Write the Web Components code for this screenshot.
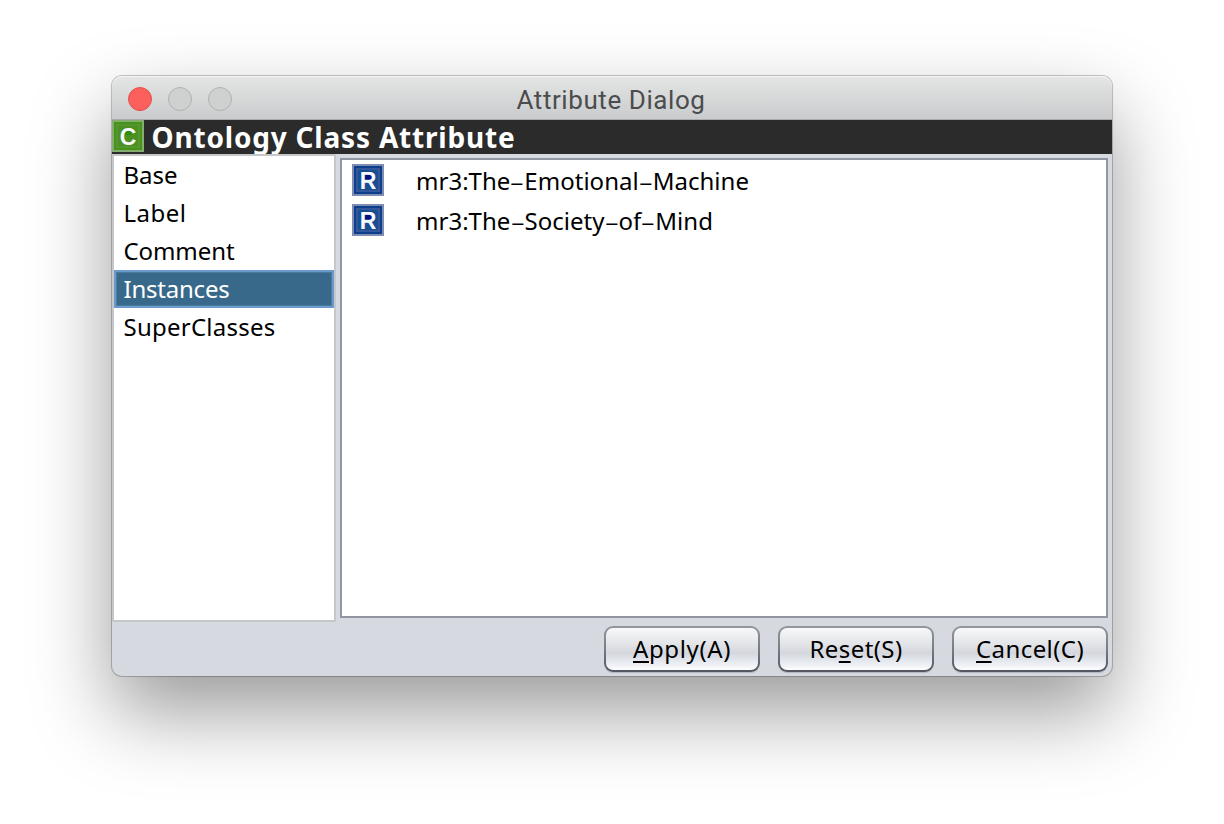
<!DOCTYPE html>
<html lang="en">
<head>
<meta charset="utf-8">
<title>Attribute Dialog</title>
<style>
html,body{margin:0;height:100%;background:#fff;overflow:hidden}
body{box-sizing:border-box;padding:76px 112px 148px;font-family:"Noto Sans","Open Sans",sans-serif;font-size:24px;color:#000}
</style>
</head>
<body>
<attribute-dialog></attribute-dialog>
<script>
const define = (name, html, ready) => {
  const t = document.createElement('template');
  t.innerHTML = html;
  customElements.define(name, class extends HTMLElement {
    connectedCallback() {
      if (this.shadowRoot) return;
      this.attachShadow({mode: 'open'}).append(t.content.cloneNode(true));
      if (ready) ready(this);
    }
  });
};

/* Text tracked so that its run fills the given width. */
define('tracked-text', `<style>:host{display:inline-block;white-space:pre}</style><slot></slot>`, el => {
  const want = +el.getAttribute('width');
  const n = el.textContent.length - el.querySelectorAll('wide-hyphen').length;
  const now = el.getBoundingClientRect().width;
  el.style.letterSpacing = ((want - now) / n) + 'px';
});

define('wide-hyphen', `<style>span{display:inline-block;transform:translateY(1px) scale(1.9,.85)}</style><span><slot></slot></span>`);

define('type-icon', `<style>
:host{display:block;width:32px;height:32px;flex:none}
svg{display:block}
text{font:bold 23px "Liberation Sans",sans-serif;fill:#f6f8fa;text-anchor:middle}
</style>
<svg width="32" height="32" viewBox="0 0 32 32">
<rect class="a" width="32" height="32"/><rect class="b" x="2" y="2" width="28" height="28"/>
<rect class="c" x="4" y="4" width="24" height="24"/><rect class="d" x="6" y="6" width="20" height="20"/>
<rect class="e" x="13" y="11" width="7" height="4"/>
<text x="16" y="24.5"></text></svg>`, el => {
  const r = el.shadowRoot, k = el.getAttribute('kind');
  const colors = k === 'C' ? ['#86ad70','#479218','#55972f','#4c9022','#2f8a10'] : ['#7f8db5','#0d3f8a','#33589a','#1a4c92','#00107c'];
  ['a','b','c','d','e'].forEach((c, i) => r.querySelector('.' + c).setAttribute('fill', colors[i]));
  r.querySelector('text').textContent = k;
});

define('title-bar', `<style>
:host{display:grid;grid-template-columns:1fr auto 1fr;align-items:center;height:44px;box-sizing:border-box;border-bottom:1px solid #aaacac;background:linear-gradient(#e4e6e6,#c9cbcc);box-shadow:inset 0 1px #f5f6f6;color:#4b4c4d;line-height:42px}
.lights{display:flex;gap:16px;padding:0 0 0 16px}
i{width:24px;height:24px;box-sizing:border-box;border:1px solid #b0b1b1;border-radius:50%;background:#cfd0d0}
.close{background:#fc605c;border-color:#e2504b}
.t{margin-left:-2px;padding-top:3px}
</style><div class="lights"><i class="close"></i><i></i><i></i></div><div class="t"><slot></slot></div>`);

define('header-band', `<style>
:host{display:flex;height:34px;background:#2b2b2b;color:#fff;font-weight:700;font-size:28px;line-height:35px}
.t{padding-left:7.5px}
</style><type-icon kind="C"></type-icon><div class="t"><slot></slot></div>`);

define('nav-item', `<style>
:host{display:block;box-sizing:border-box;height:38px;border:2px solid transparent;padding-left:7.5px;line-height:33px}
:host([selected]){background:#39698a;color:#fff;border-color:#6b9bcc;box-shadow:inset 0 0 0 1px #4c7ba0}
</style><slot></slot>`);

define('side-list', `<style>
:host{display:block;box-sizing:border-box;width:224px;height:468px;border:2px solid #c6c7c8;background:#fff}
</style><slot></slot>`);

define('resource-row', `<style>
:host{display:flex;align-items:center;height:40px;padding-left:10px;gap:32px;line-height:40px}
.t{padding-top:1px}
</style><type-icon kind="R"></type-icon><div class="t"><slot></slot></div>`);

define('instance-list', `<style>
:host{display:block;box-sizing:border-box;flex:1;height:460px;margin:4px 4px 0;border:2px solid #9296a3;background:#fff}
</style><slot></slot>`);

define('push-button', `<style>
:host{display:block;box-sizing:border-box;width:156px;height:46px;padding:2px;border-radius:9px;background:linear-gradient(#94989e,#787c83 50%,#52565e);box-shadow:0 2px 1px -1px #b2b6bd}
div{height:42px;border-radius:7px;background:linear-gradient(#f8f8f9,#e4e6e9 35%,#d5d7de 60%,#e6e9ef 80%,#fbfdff);text-align:center;line-height:42px}
</style><div><slot></slot></div>`);

define('attribute-dialog', `<style>
:host{display:flex;flex-direction:column;width:1000px;height:600px;border-radius:10px;background:#d6d9e0;box-shadow:0 0 0 1px rgba(0,0,0,.2),0 0 3px rgba(0,0,0,.06),0 36px 80px rgba(0,0,0,.4)}
title-bar{border-radius:10px 10px 0 0}
title-bar tracked-text{font-family:Roboto,sans-serif;font-size:26px}
main{display:flex;height:468px}
footer{display:flex;justify-content:flex-end;gap:18px;padding:4px 4px 0}
u{text-decoration-thickness:2px;text-underline-offset:3px;text-decoration-skip-ink:none}
wide-hyphen{display:inline-block;width:14px;text-align:center;letter-spacing:0}
</style>
<title-bar><tracked-text width="189">Attribute Dialog</tracked-text></title-bar>
<header-band><tracked-text width="364">Ontology Class Attribute</tracked-text></header-band>
<main>
<side-list>
<nav-item><tracked-text width="54">Base</tracked-text></nav-item>
<nav-item><tracked-text width="63">Label</tracked-text></nav-item>
<nav-item><tracked-text width="111">Comment</tracked-text></nav-item>
<nav-item selected><tracked-text width="106">Instances</tracked-text></nav-item>
<nav-item><tracked-text width="152">SuperClasses</tracked-text></nav-item>
</side-list>
<instance-list>
<resource-row><tracked-text width="333">mr3:The<wide-hyphen>-</wide-hyphen>Emotional<wide-hyphen>-</wide-hyphen>Machine</tracked-text></resource-row>
<resource-row><tracked-text width="297">mr3:The<wide-hyphen>-</wide-hyphen>Society<wide-hyphen>-</wide-hyphen>of<wide-hyphen>-</wide-hyphen>Mind</tracked-text></resource-row>
</instance-list>
</main>
<footer>
<push-button><tracked-text width="98"><u>A</u>pply(A)</tracked-text></push-button>
<push-button><tracked-text width="93">Re<u>s</u>et(S)</tracked-text></push-button>
<push-button><tracked-text width="108"><u>C</u>ancel(C)</tracked-text></push-button>
</footer>`);
</script>
</body>
</html>
